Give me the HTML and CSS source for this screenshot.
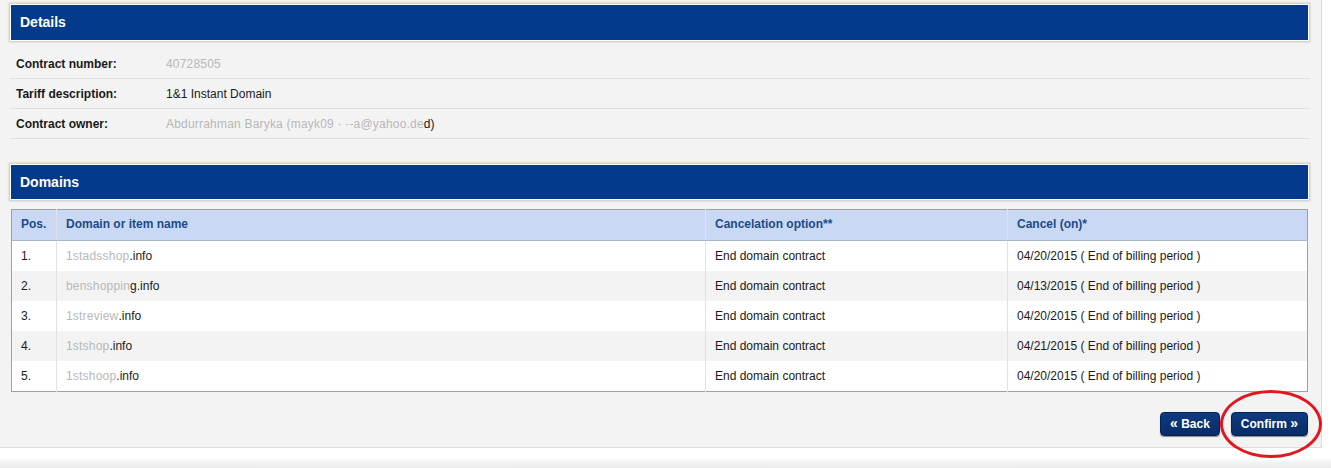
FILE: index.html
```html
<!DOCTYPE html>
<html>
<head>
<meta charset="utf-8">
<link rel="stylesheet" href="styles.css">
</head>
<body>
<div class="page">
  <div class="panel-head">Details</div>
  <div class="details">
    <div class="drow"><div class="dlabel">Contract number:</div><div class="dval"><span class="blur">40728505</span></div></div>
    <div class="drow"><div class="dlabel">Tariff description:</div><div class="dval">1&amp;1 Instant Domain</div></div>
    <div class="drow"><div class="dlabel">Contract owner:</div><div class="dval"><span class="blur">Abdurrahman Baryka (mayk09 · ·-a@yahoo.de</span>d)</div></div>
  </div>

  <div class="panel-head second">Domains</div>
  <table class="domains">
    <thead>
      <tr><th class="c-pos">Pos.</th><th class="c-name">Domain or item name</th><th class="c-opt">Cancelation option**</th><th class="c-on">Cancel (on)*</th></tr>
    </thead>
    <tbody>
      <tr><td>1.</td><td><span class="blur">1stadsshop</span>.info</td><td>End domain contract</td><td>04/20/2015 ( End of billing period )</td></tr>
      <tr class="alt"><td>2.</td><td><span class="blur">benshoppin</span>g.info</td><td>End domain contract</td><td>04/13/2015 ( End of billing period )</td></tr>
      <tr><td>3.</td><td><span class="blur">1streview</span>.info</td><td>End domain contract</td><td>04/20/2015 ( End of billing period )</td></tr>
      <tr class="alt"><td>4.</td><td><span class="blur">1stshop</span>.info</td><td>End domain contract</td><td>04/21/2015 ( End of billing period )</td></tr>
      <tr><td>5.</td><td><span class="blur">1stshoop</span>.info</td><td>End domain contract</td><td>04/20/2015 ( End of billing period )</td></tr>
    </tbody>
  </table>

  <div class="actions">
    <button class="btn"><span class="q">«</span> Back</button>
    <div class="confirm-wrap">
      <button class="btn">Confirm <span class="q">»</span></button>
      <div class="ring"></div>
    </div>
  </div>
</div>
<div class="below"></div>
</body>
</html>
```

FILE: styles.css
```css
html, body {
  margin: 0;
  padding: 0;
  background: #ffffff;
}
body {
  font-family: "Liberation Sans", Arial, sans-serif;
  font-size: 12px;
  color: #1a1a1a;
  width: 1331px;
  height: 468px;
  overflow: hidden;
}
.page {
  width: 1309px;
  height: 443px;
  padding: 4px 2px 0 10px;
  background: #f3f3f3;
  border-right: 1px solid #dcdcdc;
  border-bottom: 1px solid #dcdcdc;
}
.below {
  width: 1331px;
  height: 24px;
  background: linear-gradient(to bottom, #ffffff 0, #ffffff 10px, #f4f4f4 14px, #e6e6e6 24px);
}
.panel-head {
  box-sizing: border-box;
  width: 1299px;
  height: 37px;
  background: #043a8c;
  border: 1px solid #ffffff;
  box-shadow: 0 0 2px 1px #c4c4c4;
  color: #ffffff;
  font-weight: bold;
  font-size: 14px;
  line-height: 35px;
  padding-left: 9px;
}
.panel-head.second {
  height: 36px;
  line-height: 34px;
  margin-top: 25px;
}
.details {
  margin-top: 8px;
  width: 1300px;
}
.drow {
  display: flex;
  height: 29px;
  border-bottom: 1px solid #e1e1e1;
  align-items: center;
}
.dlabel {
  width: 150px;
  padding-left: 6px;
  font-weight: bold;
  color: #1a1a1a;
}
.dval {
  color: #1a1a1a;
}
.blur {
  color: #b8b8b8;
  letter-spacing: 0.2px;
}
.domains {
  margin-top: 9px;
  margin-left: 1px;
  width: 1297px;
  border-collapse: collapse;
  border: 1px solid #a0a0a0;
  background: #ffffff;
}
.domains th {
  background: #c9d9f3;
  color: #1d4a8a;
  font-weight: bold;
  text-align: left;
  height: 28px;
  padding: 0 0 2px 9px;
  border-bottom: 1px solid #a9b5c6;
  border-left: 1px solid #e2e2e2;
}
.domains td {
  height: 30px;
  padding: 0 0 0 9px;
  border-left: 1px solid #e2e2e2;
  color: #1a1a1a;
}
.domains th:first-child, .domains td:first-child {
  border-left: none;
}
.domains tr.alt td {
  background: #f3f3f3;
}
.c-pos { width: 35px; }
.c-name { width: 639px; }
.c-opt { width: 292px; }
.actions {
  display: flex;
  justify-content: flex-end;
  gap: 11px;
  margin-top: 20px;
  width: 1298px;
}
.btn {
  font-family: "Liberation Sans", Arial, sans-serif;
  font-size: 12px;
  font-weight: bold;
  color: #ffffff;
  background: linear-gradient(to bottom, #0f3b80 0, #082c66 100%);
  border: 1px solid #062452;
  border-radius: 4px;
  height: 24px;
  padding: 0 9px;
  white-space: nowrap;
  box-shadow: 0 1px 1px #8a8a8a;
  cursor: pointer;
}
.btn .q {
  font-size: 14px;
  line-height: 12px;
}
.confirm-wrap {
  position: relative;
}
.ring {
  position: absolute;
  left: -11px;
  top: -22px;
  width: 96px;
  height: 62px;
  border: 3px solid #e3151f;
  border-radius: 50%;
  pointer-events: none;
}
```
